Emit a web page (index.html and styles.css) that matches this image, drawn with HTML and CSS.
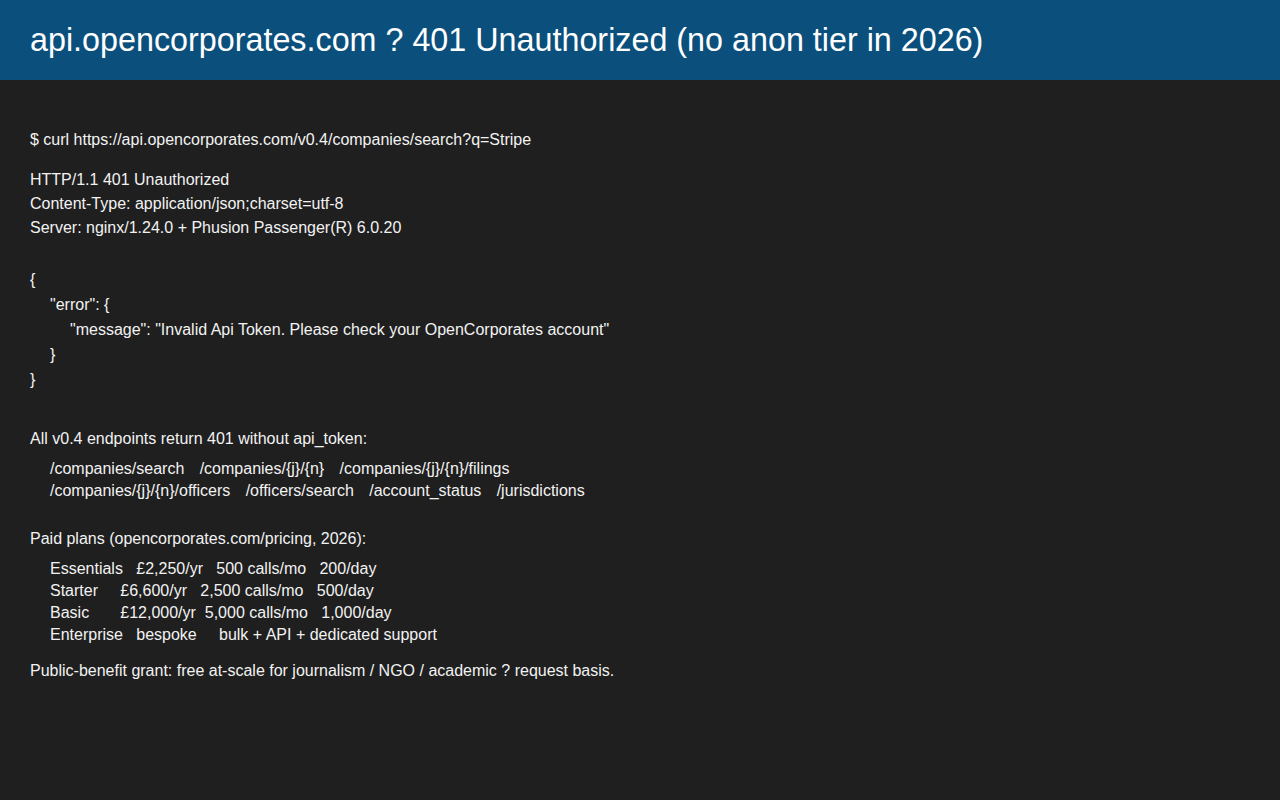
FILE: index.html
```html
<!DOCTYPE html>
<html>
<head>
<meta charset="utf-8">
<link rel="stylesheet" href="styles.css">
</head>
<body>
<header class="bar"><h1 class="title">api.opencorporates.com ? 401 Unauthorized (no anon tier in 2026)</h1></header>
<main class="content">
<p class="line cmd">$ curl https://api.opencorporates.com/v0.4/companies/search?q=Stripe</p>
<div class="headers">
<p class="line">HTTP/1.1 401 Unauthorized</p>
<p class="line">Content-Type: application/json;charset=utf-8</p>
<p class="line">Server: nginx/1.24.0 + Phusion Passenger(R) 6.0.20</p>
</div>
<div class="json">
<p class="jline">{</p>
<p class="jline ind1">"error": {</p>
<p class="jline ind2">"message": "Invalid Api Token. Please check your OpenCorporates account"</p>
<p class="jline ind1">}</p>
<p class="jline">}</p>
</div>
<p class="line section">All v0.4 endpoints return 401 without api_token:</p>
<div class="list endpoints">
<p class="row">/companies/search    /companies/{j}/{n}    /companies/{j}/{n}/filings</p>
<p class="row">/companies/{j}/{n}/officers    /officers/search    /account_status    /jurisdictions</p>
</div>
<p class="line section2">Paid plans (opencorporates.com/pricing, 2026):</p>
<div class="list">
<p class="row">Essentials   £2,250/yr   500 calls/mo   200/day</p>
<p class="row">Starter     £6,600/yr   2,500 calls/mo   500/day</p>
<p class="row">Basic       £12,000/yr  5,000 calls/mo   1,000/day</p>
<p class="row">Enterprise   bespoke     bulk + API + dedicated support</p>
</div>
<p class="line note">Public-benefit grant: free at-scale for journalism / NGO / academic ? request basis.</p>
</main>
</body>
</html>
```
FILE: styles.css
```css
html, body {
  margin: 0;
  padding: 0;
  background: #1f1f1f;
  font-family: "Liberation Sans", Arial, sans-serif;
  color: #f2f2f2;
}
.bar {
  height: 80px;
  background: #0b4f7c;
  display: flex;
  align-items: center;
  padding: 0 30px;
}
.title {
  margin: 0;
  font-size: 32.3px;
  font-weight: normal;
  color: #ffffff;
}
.content {
  padding: 48px 30px 0;
  font-size: 16px;
}
.content p {
  margin: 0;
  white-space: pre;
}
.content .line {
  line-height: 24px;
}
.content .headers {
  margin-top: 16px;
}
.content .json {
  margin-top: 27px;
}
.content .jline {
  line-height: 25px;
}
.content .ind1 {
  padding-left: 20px;
}
.content .ind2 {
  padding-left: 40px;
}
.content .section {
  margin-top: 35px;
}
.content .list {
  margin-top: 7px;
  padding-left: 20px;
}
.content .endpoints {
  word-spacing: -0.6px;
}
.content .row {
  line-height: 22px;
}
.content .section2 {
  margin-top: 25px;
}
.content .note {
  margin-top: 13px;
}
```
